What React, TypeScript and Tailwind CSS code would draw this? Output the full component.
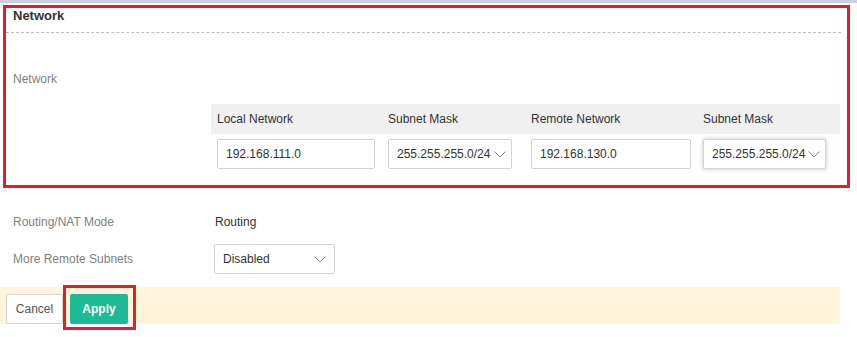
import React from "react";

const Chevron = () => (
  <svg width="12" height="7" viewBox="0 0 12 7" fill="none" className="shrink-0">
    <polyline points="0.5,0.5 6,6 11.5,0.5" stroke="#8a8a8a" strokeWidth="1" />
  </svg>
);

const Select = ({ value, className }: { value: string; className?: string }) => (
  <div
    className={
      "flex h-[30px] items-center justify-between rounded-[2px] border border-[#d4d4d4] bg-white pl-[8px] pr-[5px] text-[#333] " +
      (className ?? "")
    }
  >
    <span>{value}</span>
    <Chevron />
  </div>
);

const Input = ({ value, className }: { value: string; className?: string }) => (
  <div
    className={
      "flex h-[30px] items-center rounded-[2px] border border-[#d4d4d4] bg-white pl-[8px] text-[#333] " +
      (className ?? "")
    }
  >
    {value}
  </div>
);

const App = () => {
  return (
    <div className="relative h-[337px] w-[857px] overflow-hidden bg-white font-['Liberation_Sans',Arial,sans-serif] text-[12px]">
      <div className="h-[3px] bg-[#c9d1dc]" />

      {/* Network section */}
      <div className="ml-[3px] mt-[2px] h-[183px] w-[847px] border-[3px] border-[#e01e2d]">
        <div className="mr-[6px] h-[25px] border-b border-dashed border-[#bdbdbd] px-[7px] text-[13px] font-bold leading-[15px] text-[#333]">
          Network
        </div>
        <div className="mt-[38px] px-[7px] leading-[16px] text-[#808080]">Network</div>
        <div className="ml-[205px] mt-[17px] w-[629px]">
          <div className="grid h-[30px] grid-cols-[171px_143px_172px_143px] items-center bg-[#f0f0f0] text-[#333]">
            <div className="pl-[6px]">Local Network</div>
            <div className="pl-[6px]">Subnet Mask</div>
            <div className="pl-[6px]">Remote Network</div>
            <div className="pl-[6px]">Subnet Mask</div>
          </div>
          <div className="mt-[5px] grid grid-cols-[171px_143px_172px_143px]">
            <div className="pl-[6px]">
              <Input value="192.168.111.0" className="w-[158px]" />
            </div>
            <div className="pl-[6px]">
              <Select value="255.255.255.0/24" className="w-[124px]" />
            </div>
            <div className="pl-[6px]">
              <Input value="192.168.130.0" className="w-[160px]" />
            </div>
            <div className="pl-[6px]">
              <Select
                value="255.255.255.0/24"
                className="w-[123px] shadow-[0_0_4px_rgba(0,0,0,0.25)]"
              />
            </div>
          </div>
        </div>
      </div>

      {/* Other settings */}
      <div className="mt-[19px] flex h-[30px] items-center">
        <div className="w-[215px] pl-[13px] text-[#808080]">Routing/NAT Mode</div>
        <div className="text-[#333]">Routing</div>
      </div>
      <div className="mt-[7px] flex h-[30px] items-center">
        <div className="w-[214px] pl-[13px] text-[#808080]">More Remote Subnets</div>
        <Select value="Disabled" className="w-[121px] pr-[8px]" />
      </div>

      {/* Footer */}
      <div className="mt-[13px] flex h-[37px] w-[840px] gap-[7px] bg-[#fff5db] pl-[6px] pt-[7px]">
        <button className="h-[30px] w-[57px] rounded-[2px] border border-[#d4d4d4] bg-white text-[#555]">
          Cancel
        </button>
        <div className="relative">
          <button className="h-[30px] w-[58px] rounded-[2px] bg-[#1dba95] font-semibold text-white">
            Apply
          </button>
          <span className="pointer-events-none absolute bottom-[-6px] left-[-7px] right-[-8px] top-[-9px] border-[3px] border-[#e01e2d]" />
        </div>
      </div>
    </div>
  );
};

export default App;
